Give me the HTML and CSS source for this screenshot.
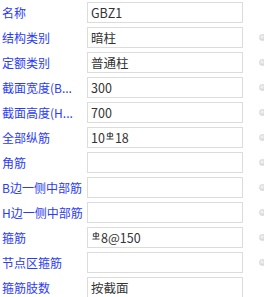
FILE: index.html
```html
<!DOCTYPE html>
<html lang="zh">
<head>
  <meta charset="UTF-8" />
  <title>属性</title>
  <link rel="stylesheet" href="styles.css">
</head>
<body>

  <div class="prop-list">
    <div class="row">
      <div class="label">名称</div>
      <div class="field">GBZ1</div>
    </div>
    <div class="row">
      <div class="label">结构类别</div>
      <div class="field">暗柱</div>
      <span class="dot"></span>
    </div>
    <div class="row">
      <div class="label">定额类别</div>
      <div class="field">普通柱</div>
      <span class="dot"></span>
    </div>
    <div class="row">
      <div class="label">截面宽度(B...</div>
      <div class="field">300</div>
      <span class="dot"></span>
    </div>
    <div class="row">
      <div class="label">截面高度(H...</div>
      <div class="field">700</div>
      <span class="dot"></span>
    </div>
    <div class="row">
      <div class="label">全部纵筋</div>
      <div class="field">10<svg class="bar" viewBox="0 0 9 9"><path d="M4.5 0.5V8.5M1.5 2.5H7.5V5.5H1.5ZM0.5 8.5H8.5" /></svg>18</div>
      <span class="dot"></span>
    </div>
    <div class="row">
      <div class="label">角筋</div>
      <div class="field"></div>
      <span class="dot"></span>
    </div>
    <div class="row">
      <div class="label">B边一侧中部筋</div>
      <div class="field"></div>
      <span class="dot"></span>
    </div>
    <div class="row">
      <div class="label">H边一侧中部筋</div>
      <div class="field"></div>
      <span class="dot"></span>
    </div>
    <div class="row">
      <div class="label">箍筋</div>
      <div class="field"><svg class="bar" viewBox="0 0 9 9"><path d="M4.5 0.5V8.5M1.5 2.5H7.5V5.5H1.5ZM0.5 8.5H8.5" /></svg>8@150</div>
      <span class="dot"></span>
    </div>
    <div class="row">
      <div class="label">节点区箍筋</div>
      <div class="field"></div>
      <span class="dot"></span>
    </div>
    <div class="row">
      <div class="label">箍筋肢数</div>
      <div class="field">按截面</div>
    </div>
  </div>

</body>
</html>
```

FILE: styles.css
```css
body {
  margin: 0;
  background: white;
  font-family: "Noto Sans CJK SC", "Noto Sans", sans-serif;
  font-size: 12px;
  overflow: hidden;
}

.prop-list {
  padding-top: 2px;
}

.row {
  display: flex;
  align-items: flex-start;
  height: 25px;
}

.label {
  flex-shrink: 0;
  width: 85px;
  padding-left: 2px;
  color: #2b3bf5;
  line-height: 21px;
  white-space: nowrap;
  overflow: hidden;
}

.field {
  flex-shrink: 0;
  width: 151px;
  height: 19px;
  border: 1px solid #dcdcdc;
  padding-left: 3px;
  color: #333;
  font-size: 12.5px;
  line-height: 19px;
  white-space: nowrap;
}

.bar {
  width: 8px;
  height: 9px;
  vertical-align: 3px;
  margin: 0 1px;
}

.bar path {
  fill: none;
  stroke: #333;
  stroke-width: 1;
}

.dot {
  flex-shrink: 0;
  width: 7px;
  height: 7px;
  margin-left: 16px;
  margin-top: 7px;
  border-radius: 50%;
  background: radial-gradient(circle at 35% 35%, #f4f4f4, #cfcfcf);
  border: 1px solid #d6d6d6;
  box-sizing: border-box;
}
```
